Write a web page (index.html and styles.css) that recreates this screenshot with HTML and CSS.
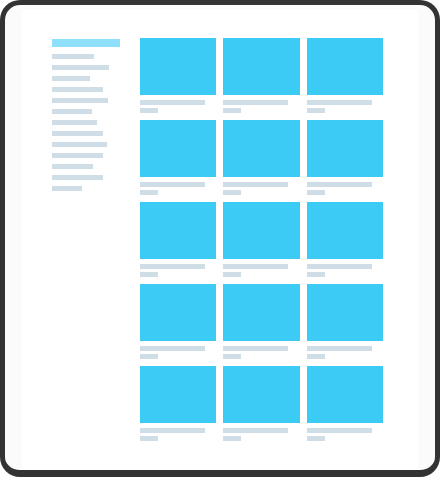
FILE: index.html
```html
<!DOCTYPE html>
<html lang="en">

<head>
    <meta charset="UTF-8" />
    <meta name="viewport" content="width=device-width, initial-scale=1.0" />
    <title>Gallery wireframe</title>
    <link rel="stylesheet" href="styles.css">
</head>

<body>
    <div class="frame">
        <div class="page">
            <aside class="sidebar">
                <div class="nav-active"></div>
                <div class="nav-line" style="width: 42px"></div>
                <div class="nav-line" style="width: 57px"></div>
                <div class="nav-line" style="width: 38px"></div>
                <div class="nav-line" style="width: 51px"></div>
                <div class="nav-line" style="width: 56px"></div>
                <div class="nav-line" style="width: 40px"></div>
                <div class="nav-line" style="width: 45px"></div>
                <div class="nav-line" style="width: 51px"></div>
                <div class="nav-line" style="width: 55px"></div>
                <div class="nav-line" style="width: 51px"></div>
                <div class="nav-line" style="width: 41px"></div>
                <div class="nav-line" style="width: 51px"></div>
                <div class="nav-line" style="width: 30px"></div>
            </aside>
            <main class="grid" id="grid"></main>
        </div>
    </div>

    <script>
        const grid = document.getElementById('grid');
        for (let i = 0; i < 15; i++) {
            const card = document.createElement('div');
            card.className = 'card';
            card.innerHTML = `
          <div class="thumb"></div>
          <div class="title"></div>
          <div class="meta"></div>
        `;
            grid.appendChild(card);
        }
    </script>
</body>

</html>
```

FILE: styles.css
```css
html,
body {
    margin: 0;
    height: 100%;
    background: #fff;
}

.frame {
    box-sizing: border-box;
    width: 440px;
    height: 477px;
    border: 5px solid #333;
    border-bottom-width: 7px;
    border-radius: 20px;
    background: #fbfbfb;
    padding: 5px 17px 0 17px;
    overflow: hidden;
}

.page {
    display: flex;
    gap: 20px;
    height: 100%;
    background: #fff;
    padding: 28px 35px 0 30px;
    box-sizing: border-box;
}

.sidebar {
    width: 68px;
    flex-shrink: 0;
    display: flex;
    flex-direction: column;
    gap: 6px;
    padding-top: 1px;
}

.nav-active {
    height: 8px;
    background: #8ee0fa;
    margin-bottom: 1px;
}

.nav-line {
    height: 5px;
    background: #cfdde7;
}

.grid {
    flex: 1;
    display: grid;
    grid-template-columns: repeat(3, 1fr);
    column-gap: 7px;
    row-gap: 7px;
    align-content: start;
}

.card {
    display: flex;
    flex-direction: column;
}

.thumb {
    height: 57px;
    background: #3ccbf4;
}

.title {
    width: 65px;
    height: 5px;
    margin-top: 5px;
    background: #cfdde7;
}

.meta {
    width: 18px;
    height: 5px;
    margin-top: 3px;
    background: #cfdde7;
}
```
